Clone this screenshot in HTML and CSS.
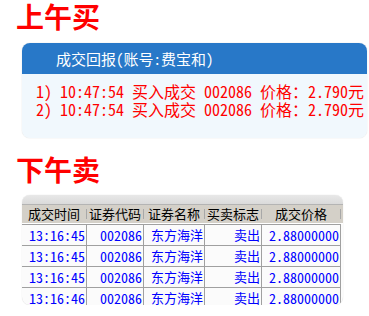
FILE: index.html
```html
<!DOCTYPE html>
<html lang="zh-CN">
<head>
<meta charset="utf-8">
<link rel="stylesheet" href="styles.css">
</head>
<body>
<h1 class="title">上午买</h1>
<div class="card">
  <div class="card-head">成交回报(账号:费宝和)</div>
  <div class="card-body">
    <div class="line">1) 10:47:54 买入成交 002086 价格：2.790元</div>
    <div class="line">2) 10:47:54 买入成交 002086 价格：2.790元</div>
  </div>
</div>
<h1 class="title title-2">下午卖</h1>
<div class="grid-box">
  <div class="grid-top"></div>
  <div class="grid-head">
    <span>成交时间</span><span>证券代码</span><span>证券名称</span><span>买卖标志</span><span>成交价格</span>
  </div>
  <div class="row"><span>13:16:45</span><span>002086</span><span class="cjk">东方海洋</span><span class="cjk">卖出</span><span>2.88000000</span></div>
  <div class="row"><span>13:16:45</span><span>002086</span><span class="cjk">东方海洋</span><span class="cjk">卖出</span><span>2.88000000</span></div>
  <div class="row"><span>13:16:45</span><span>002086</span><span class="cjk">东方海洋</span><span class="cjk">卖出</span><span>2.88000000</span></div>
  <div class="row"><span>13:16:46</span><span>002086</span><span class="cjk">东方海洋</span><span class="cjk">卖出</span><span>2.88000000</span></div>
</div>
</body>
</html>
```
FILE: styles.css
```css
body {
  margin: 0;
  background: #fff;
  font-family: "Noto Sans CJK SC", sans-serif;
}

.title {
  margin: 0 0 0 16px;
  font-size: 28px;
  line-height: 32px;
  font-weight: 700;
  color: #ff0000;
}

.title-2 {
  margin-top: 15px;
}

.card {
  margin: 11px 2px 0 22px;
  border-radius: 8px;
  overflow: hidden;
  box-shadow: 0 0 1px rgba(0, 0, 0, 0.25);
}

.card-head {
  height: 31px;
  background: #2878c8;
  color: #fff;
  font-size: 15px;
  line-height: 31px;
  padding-left: 34px;
  font-feature-settings: "hwid" 1;
}

.card-body {
  background: #f1f8fd;
  padding: 8px 0 20px 14px;
}

.line {
  font-size: 16px;
  line-height: 18px;
  color: #ff0000;
  white-space: pre;
  font-feature-settings: "hwid" 1;
}

.grid-box {
  margin: 10px 0 0 22px;
  width: 321px;
  border-radius: 8px;
  overflow: hidden;
  background: #fbfbfb;
  box-shadow: 0 0 1px rgba(0, 0, 0, 0.2);
}

.grid-top {
  height: 9px;
  background: linear-gradient(#e8e8e8, #dadada);
  border-bottom: 1px solid #b4b4b4;
}

.grid-head {
  display: grid;
  grid-template-columns: 65px 57px 61px 57px 79px;
  align-items: center;
  height: 18px;
  background: #d4d0c8;
  border-bottom: 1px solid #fff;
}

.grid-head span {
  height: 10px;
  line-height: 10px;
  font-size: 13px;
  text-align: center;
  color: #000;
  white-space: nowrap;
  border-right: 1px solid #a8a8a8;
}

.row {
  display: grid;
  grid-template-columns: 65px 57px 61px 57px 79px;
  width: max-content;
  height: 20px;
  border-top: 1px solid #a0a0a0;
}

.row:last-child {
  height: 17px;
}

.row span {
  padding: 3px 1px 0 0;
  border-right: 1px solid #a0a0a0;
  text-align: right;
  font-size: 14px;
  line-height: 14px;
  color: #0000ff;
  white-space: nowrap;
  font-feature-settings: "hwid" 1;
}

.row .cjk {
  font-size: 13px;
}
```
